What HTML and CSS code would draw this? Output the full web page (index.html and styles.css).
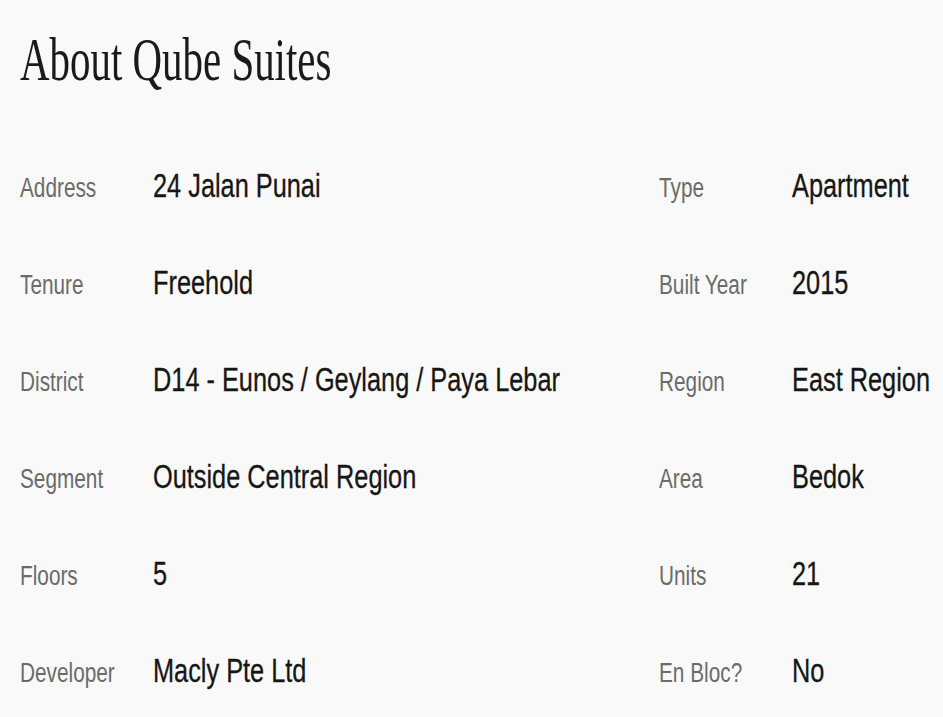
FILE: index.html
```html
<!DOCTYPE html>
<html lang="en">
<head>
<meta charset="utf-8">
<title>About Qube Suites</title>
<link rel="stylesheet" href="styles.css">
</head>
<body>
<main class="about">
  <h1 class="title"><span class="squeeze-serif">About Qube Suites</span></h1>
  <dl class="facts">
    <div class="row">
      <dt class="label"><span class="squeeze">Address</span></dt>
      <dd class="value"><span class="squeeze">24 Jalan Punai</span></dd>
      <dt class="label"><span class="squeeze">Type</span></dt>
      <dd class="value"><span class="squeeze">Apartment</span></dd>
    </div>
    <div class="row">
      <dt class="label"><span class="squeeze">Tenure</span></dt>
      <dd class="value"><span class="squeeze">Freehold</span></dd>
      <dt class="label"><span class="squeeze">Built Year</span></dt>
      <dd class="value"><span class="squeeze">2015</span></dd>
    </div>
    <div class="row">
      <dt class="label"><span class="squeeze">District</span></dt>
      <dd class="value"><span class="squeeze">D14 - Eunos / Geylang / Paya Lebar</span></dd>
      <dt class="label"><span class="squeeze">Region</span></dt>
      <dd class="value"><span class="squeeze">East Region</span></dd>
    </div>
    <div class="row">
      <dt class="label"><span class="squeeze">Segment</span></dt>
      <dd class="value"><span class="squeeze">Outside Central Region</span></dd>
      <dt class="label"><span class="squeeze">Area</span></dt>
      <dd class="value"><span class="squeeze">Bedok</span></dd>
    </div>
    <div class="row">
      <dt class="label"><span class="squeeze">Floors</span></dt>
      <dd class="value"><span class="squeeze">5</span></dd>
      <dt class="label"><span class="squeeze">Units</span></dt>
      <dd class="value"><span class="squeeze">21</span></dd>
    </div>
    <div class="row">
      <dt class="label"><span class="squeeze">Developer</span></dt>
      <dd class="value"><span class="squeeze">Macly Pte Ltd</span></dd>
      <dt class="label"><span class="squeeze">En Bloc?</span></dt>
      <dd class="value"><span class="squeeze">No</span></dd>
    </div>
  </dl>
</main>
</body>
</html>
```

FILE: styles.css
```css
html, body {
  margin: 0;
  padding: 0;
  background: #f9f9f9;
}

body {
  font-family: "Liberation Sans", Arial, sans-serif;
  color: #1a1a1a;
  overflow: hidden;
}

.about {
  padding: 28px 0 0 20px;
}

.title {
  margin: 0;
  font-family: "Liberation Serif", "Times New Roman", serif;
  font-weight: 400;
  font-size: 62px;
  line-height: 62px;
  color: #1a1a1a;
  white-space: nowrap;
}

.squeeze-serif {
  display: inline-block;
  transform: scaleX(0.66);
  transform-origin: left center;
}

.facts {
  margin: 47px 0 0 0;
  padding: 0;
}

.row {
  display: grid;
  grid-template-columns: 133px 506px 133px 1fr;
  align-items: baseline;
  height: 97px;
  line-height: 97px;
}

.label, .value {
  margin: 0;
  white-space: nowrap;
}

.label {
  font-size: 27px;
  color: #6b6b6b;
}

.value {
  font-size: 34px;
  color: #161616;
  -webkit-text-stroke: 0.3px #161616;
}

.squeeze {
  display: inline-block;
  transform-origin: left center;
}

.label .squeeze {
  transform: scaleX(0.77);
}

.value .squeeze {
  transform: scaleX(0.745);
}
```
